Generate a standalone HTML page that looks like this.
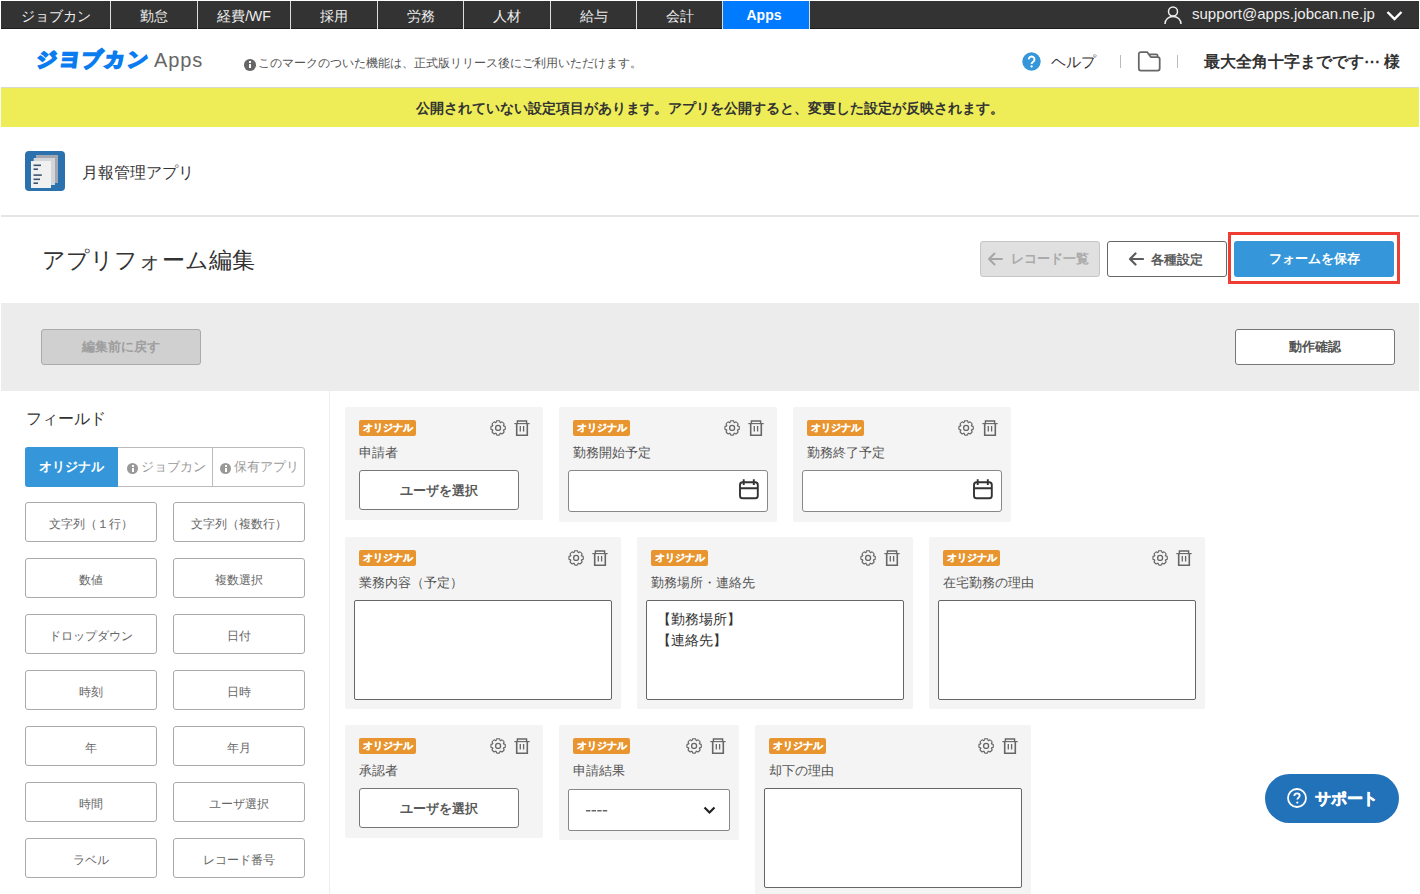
<!DOCTYPE html>
<html lang="ja">
<head>
<meta charset="utf-8">
<style>
*{box-sizing:border-box;margin:0;padding:0}
html,body{width:1420px;height:894px;overflow:hidden;background:#fff}
body{position:relative;font-family:"Liberation Sans",sans-serif;color:#333}
.a{position:absolute}
/* nav */
.nav{position:absolute;left:1px;top:1px;width:1418px;height:28px;background:#333;border-bottom:1px solid #1c1c1c}
.tab{position:absolute;top:1px;height:28px;background:#333;border-bottom:1px solid #1c1c1c;color:#eee;font-size:14px;line-height:30px;text-align:center;white-space:nowrap}
.tab.on{background:#007bff;border-bottom-color:#007bff;color:#fff;font-weight:bold}
.sep{position:absolute;top:1px;width:1px;height:28px;background:#ddd}
/* header */
.logo{position:absolute;left:37px;top:44px;font-size:20px;font-weight:bold;color:#0a7cf0;letter-spacing:2.6px;transform:skewX(-7deg);white-space:nowrap;line-height:30px;-webkit-text-stroke:2px #0a7cf0}
.apps{position:absolute;left:154px;top:47px;font-size:20px;color:#666;letter-spacing:0.9px;line-height:26px}
.info{position:absolute;left:244px;top:56px;font-size:12px;color:#555;white-space:nowrap;line-height:14px}
.ic-i{display:inline-block;width:11px;height:11px;border-radius:50%;background:#555;position:relative;vertical-align:-2.5px;margin-right:3px}
.ic-i:before{content:"";position:absolute;left:4.5px;top:2px;width:2px;height:2px;background:#fff}
.ic-i:after{content:"";position:absolute;left:4.5px;top:5px;width:2px;height:4px;background:#fff}
.yellow{position:absolute;left:1px;top:87px;width:1418px;height:40px;background:#eeed58;border-top:1px solid #d9d9cf;text-align:center;font-size:14px;font-weight:bold;line-height:40px;color:#333}
.apphead{position:absolute;left:1px;top:127px;width:1418px;height:90px;background:#fff;border-bottom:2px solid #e5e5e5}
.btn{position:absolute;border-radius:3px;text-align:center;font-weight:bold;font-size:13px;white-space:nowrap}
.gband{position:absolute;left:1px;top:303px;width:1418px;height:88px;background:#ececec}
.side-b{position:absolute;left:329px;top:391px;width:1px;height:503px;background:#eee}
.fb{position:absolute;width:132px;height:40px;border:1px solid #aaa;border-radius:3px;background:#fff;text-align:center;font-size:12px;line-height:42px;color:#666;white-space:nowrap}
.card{position:absolute;background:#f4f4f4;border-radius:2px}
.badge{position:absolute;left:13.7px;top:13px;width:57.5px;height:16px;background:#e8952f;border-radius:2px;color:#fff;font-size:10px;font-weight:bold;line-height:16px;-webkit-text-stroke:0.2px #fff;padding-left:1px;text-align:center;white-space:nowrap}
.lbl{position:absolute;left:14px;top:38px;font-size:13px;color:#555;line-height:16px;white-space:nowrap}
.gear{position:absolute;top:13px;width:16px;height:16px}
.trash{position:absolute;top:13px;width:16px;height:16px}
.ta{position:absolute;background:#fff;border:1px solid #666;border-radius:2px}
</style>
</head>
<body>
<!-- NAV -->
<div class="nav"></div>
<div class="tab" style="left:1px;width:109px">ジョブカン</div>
<div class="sep" style="left:110px"></div>
<div class="tab" style="left:111px;width:86px">勤怠</div>
<div class="sep" style="left:197px"></div>
<div class="tab" style="left:198px;width:92px">経費/WF</div>
<div class="sep" style="left:290px"></div>
<div class="tab" style="left:291px;width:86px">採用</div>
<div class="sep" style="left:377px"></div>
<div class="tab" style="left:378px;width:85px">労務</div>
<div class="sep" style="left:463px"></div>
<div class="tab" style="left:464px;width:86px">人材</div>
<div class="sep" style="left:550px"></div>
<div class="tab" style="left:551px;width:85px">給与</div>
<div class="sep" style="left:636px"></div>
<div class="tab" style="left:637px;width:85px">会計</div>
<div class="sep" style="left:722px"></div>
<div class="tab on" style="left:723px;width:86px;line-height:29px;padding-right:4px">Apps</div>
<div class="sep" style="left:809px"></div>

<!-- user -->
<svg class="a" style="left:1163px;top:5px" width="20" height="20" viewBox="0 0 20 20" fill="none" stroke="#eee" stroke-width="1.5"><circle cx="10" cy="6.5" r="4.5"/><path d="M2 19c0-4.5 3.6-7.5 8-7.5s8 3 8 7.5"/></svg>
<div class="a" style="left:1192px;top:5px;font-size:15px;color:#eee;line-height:18px;white-space:nowrap">support@apps.jobcan.ne.jp</div>
<svg class="a" style="left:1386px;top:10px" width="17" height="11" viewBox="0 0 17 11" fill="none" stroke="#fff" stroke-width="2.4"><path d="M1.5 2l7 7 7-7"/></svg>

<!-- HEADER -->
<div class="logo">ジヨブカン</div>
<div class="apps">Apps</div>
<div class="info"><span class="ic-i" style="width:11.5px;height:11.5px;vertical-align:-3.5px;background:#666;margin-right:2.5px"></span>このマークのついた機能は、正式版リリース後にご利用いただけます。</div>

<svg class="a" style="left:1022px;top:52px" width="19" height="19" viewBox="0 0 19 19"><circle cx="9.5" cy="9.5" r="9.2" fill="#3597da"/><path d="M6.8 7.4a2.85 2.85 0 1 1 4.4 2.3c-1 .7-1.6 1.2-1.6 2.2v.2" fill="none" stroke="#fff" stroke-width="1.9"/><circle cx="9.6" cy="14.4" r="1.15" fill="#fff"/></svg>
<div class="a" style="left:1051px;top:53px;font-size:15px;color:#333;line-height:18px">ヘルプ</div>
<div class="a" style="left:1120px;top:55px;width:1px;height:13px;background:#bbb"></div>
<svg class="a" style="left:1137px;top:51px" width="24" height="21" viewBox="0 0 24 21" fill="none" stroke="#666" stroke-width="1.75" stroke-linejoin="round"><path d="M1.8 3a2 2 0 0 1 2-2h6.3l3.7 5.1h6.9a2 2 0 0 1 2 2v9.5a2 2 0 0 1-2 2H3.8a2 2 0 0 1-2-2z"/><path d="M12.3 3.4h6.8a1.6 1.6 0 0 1 1.6 1.6v1.1"/></svg>
<div class="a" style="left:1177px;top:55px;width:1px;height:13px;background:#bbb"></div>
<div class="a" style="left:1204px;top:53px;font-size:16px;font-weight:bold;color:#333;line-height:18px;white-space:nowrap">最大全角十字までです⋯ 様</div>

<div class="yellow">公開されていない設定項目があります。アプリを公開すると、変更した設定が反映されます。</div>

<!-- APP HEADER -->
<div class="apphead"></div>
<svg class="a" style="left:25px;top:151px" width="40" height="40" viewBox="0 0 40 40">
<rect width="40" height="40" rx="4" fill="#2b71ad"/>
<rect x="11" y="4" width="22" height="28" fill="#a3a8b0"/>
<rect x="8.7" y="7" width="21.3" height="27" fill="#d2d6da"/>
<rect x="6" y="10" width="20" height="27" fill="#f0f0f0"/>
<g fill="#3d5470"><rect x="8.5" y="13.5" width="7.5" height="1.6"/><rect x="8.5" y="17.4" width="4.5" height="1.6"/><rect x="8.5" y="23.3" width="8.3" height="1.6"/><rect x="8.5" y="27.5" width="6.5" height="1.6"/><rect x="8.5" y="31.4" width="4.5" height="1.6"/></g>
</svg>
<div class="a" style="left:82px;top:163px;font-size:16px;color:#333;line-height:20px;white-space:nowrap">月報管理アプリ</div>

<!-- TITLE -->
<div class="a" style="left:42px;top:247px;font-size:23px;color:#333;line-height:26px;white-space:nowrap">アプリフォーム編集</div>

<div class="btn" style="left:980px;top:241px;width:120px;height:36px;background:#e0e0e0;border:1px solid #c6c6c6;color:#aaa;line-height:34px">
<svg style="position:absolute;left:6px;top:10px" width="16" height="14" viewBox="0 0 16 14" fill="none" stroke="#a6a6a6" stroke-width="2" stroke-linecap="round" stroke-linejoin="round"><path d="M15 7H2M7.5 1.5L2 7l5.5 5.5"/></svg>
<span style="position:absolute;left:30px;top:0">レコード一覧</span></div>
<div class="btn" style="left:1107px;top:241px;width:120px;height:36px;background:#fff;border:1px solid #666;color:#5c5c5c;line-height:35px">
<svg style="position:absolute;left:20px;top:10px" width="16" height="14" viewBox="0 0 16 14" fill="none" stroke="#5c5c5c" stroke-width="2.2" stroke-linecap="round" stroke-linejoin="round"><path d="M15 7H2M7.5 1.5L2 7l5.5 5.5"/></svg>
<span style="position:absolute;left:43px;top:0">各種設定</span></div>
<div class="a" style="left:1228px;top:232px;width:172px;height:52px;border:3px solid #ee3d32"></div>
<div class="btn" style="left:1234px;top:241px;width:160px;height:36px;background:#3597da;color:#fff;line-height:36px">フォームを保存</div>

<!-- GRAY BAND -->
<div class="gband"></div>
<div class="btn" style="left:41px;top:329px;width:160px;height:36px;background:#d0d0d0;border:1px solid #aaa;color:#9e9e9e;line-height:34px">編集前に戻す</div>
<div class="btn" style="left:1235px;top:329px;width:160px;height:36px;background:#fff;border:1px solid #777;color:#555;line-height:34px">動作確認</div>

<!-- SIDEBAR -->
<div class="side-b"></div>
<div class="a" style="left:26px;top:410px;font-size:16px;color:#333;line-height:18px">フィールド</div>
<div class="a" style="left:25px;top:447px;width:280px;height:40px;border:1px solid #bbb;border-radius:3px;background:#fff"></div>
<div class="a" style="left:25px;top:447px;width:93px;height:40px;background:#3597da;border-radius:3px 0 0 3px;color:#fff;font-size:13px;font-weight:bold;text-align:center;line-height:40px">オリジナル</div>
<div class="a" style="left:212px;top:447px;width:1px;height:40px;background:#bbb"></div>
<div class="a" style="left:127px;top:458px;font-size:13px;color:#999;line-height:18px;white-space:nowrap"><span class="ic-i" style="background:#999"></span>ジョブカン</div>
<div class="a" style="left:220px;top:458px;font-size:13px;color:#999;line-height:18px;white-space:nowrap"><span class="ic-i" style="background:#999"></span>保有アプリ</div>

<div class="fb" style="left:25px;top:502px">文字列（１行）</div>
<div class="fb" style="left:173px;top:502px">文字列（複数行）</div>
<div class="fb" style="left:25px;top:558px">数値</div>
<div class="fb" style="left:173px;top:558px">複数選択</div>
<div class="fb" style="left:25px;top:614px">ドロップダウン</div>
<div class="fb" style="left:173px;top:614px">日付</div>
<div class="fb" style="left:25px;top:670px">時刻</div>
<div class="fb" style="left:173px;top:670px">日時</div>
<div class="fb" style="left:25px;top:726px">年</div>
<div class="fb" style="left:173px;top:726px">年月</div>
<div class="fb" style="left:25px;top:782px">時間</div>
<div class="fb" style="left:173px;top:782px">ユーザ選択</div>
<div class="fb" style="left:25px;top:838px">ラベル</div>
<div class="fb" style="left:173px;top:838px">レコード番号</div>

<!-- CARDS -->
<svg width="0" height="0" style="position:absolute">
<symbol id="gear" viewBox="0 0 16 16"><path fill="none" stroke="#666" stroke-width="1.15" stroke-linejoin="round" d="M6.12 2.45L6.60 0.86A7.2 7.2 0 0 1 9.60 0.86L10.08 2.45A5.8 5.8 0 0 1 10.55 2.64L12.02 1.86A7.2 7.2 0 0 1 14.14 3.98L13.36 5.45A5.8 5.8 0 0 1 13.55 5.92L15.14 6.40A7.2 7.2 0 0 1 15.14 9.40L13.55 9.88A5.8 5.8 0 0 1 13.36 10.35L14.14 11.82A7.2 7.2 0 0 1 12.02 13.94L10.55 13.16A5.8 5.8 0 0 1 10.08 13.35L9.60 14.94A7.2 7.2 0 0 1 6.60 14.94L6.12 13.35A5.8 5.8 0 0 1 5.65 13.16L4.18 13.94A7.2 7.2 0 0 1 2.06 11.82L2.84 10.35A5.8 5.8 0 0 1 2.65 9.88L1.06 9.40A7.2 7.2 0 0 1 1.06 6.40L2.65 5.92A5.8 5.8 0 0 1 2.84 5.45L2.06 3.98A7.2 7.2 0 0 1 4.18 1.86L5.65 2.64A5.8 5.8 0 0 1 6.12 2.45Z"/><circle cx="8.1" cy="7.9" r="2.5" fill="none" stroke="#666" stroke-width="1.3"/></symbol>
<symbol id="trash" viewBox="0 0 16 16"><g fill="none" stroke="#666"><path stroke-width="1.1" d="M0.3 3.6h15.4"/><path stroke-width="1.4" d="M3.4 3.6V1h9.2v2.6"/><path stroke-width="1.6" d="M2.7 3.6v11.6h10.6V3.6"/><path stroke-width="1.3" d="M6.3 6v5.5M9.6 6v5.5"/></g></symbol>
</svg>
<div class="card" style="left:345px;top:407px;width:198px;height:113px"><div class="badge">オリジナル</div><svg class="gear" style="left:145px" viewBox="0 0 16 16"><use href="#gear"/></svg><svg class="trash" style="left:169px" viewBox="0 0 16 16"><use href="#trash"/></svg><div class="lbl">申請者</div><div class="ta" style="left:14px;top:63px;width:160px;height:40px;border-color:#777;border-radius:3px;text-align:center;font-size:13px;font-weight:bold;color:#5a5a5a;line-height:40px">ユーザを選択</div></div>
<div class="card" style="left:559px;top:407px;width:218px;height:115px"><div class="badge">オリジナル</div><svg class="gear" style="left:165px" viewBox="0 0 16 16"><use href="#gear"/></svg><svg class="trash" style="left:189px" viewBox="0 0 16 16"><use href="#trash"/></svg><div class="lbl">勤務開始予定</div><div class="ta" style="left:9px;top:63px;width:200px;height:42px;border-color:#888;border-radius:3px"><svg style="position:absolute;left:169px;top:8px" width="22" height="22" viewBox="0 0 22 22" fill="none" stroke="#333" stroke-width="1.9"><rect x="2" y="3.3" width="17.8" height="16" rx="2.6"/><path d="M2 9.2h17.8M5.7 0.3v5.6M15.8 0.3v5.6"/></svg></div></div>
<div class="card" style="left:793px;top:407px;width:218px;height:115px"><div class="badge">オリジナル</div><svg class="gear" style="left:165px" viewBox="0 0 16 16"><use href="#gear"/></svg><svg class="trash" style="left:189px" viewBox="0 0 16 16"><use href="#trash"/></svg><div class="lbl">勤務終了予定</div><div class="ta" style="left:9px;top:63px;width:200px;height:42px;border-color:#888;border-radius:3px"><svg style="position:absolute;left:169px;top:8px" width="22" height="22" viewBox="0 0 22 22" fill="none" stroke="#333" stroke-width="1.9"><rect x="2" y="3.3" width="17.8" height="16" rx="2.6"/><path d="M2 9.2h17.8M5.7 0.3v5.6M15.8 0.3v5.6"/></svg></div></div>
<div class="card" style="left:345px;top:537px;width:276px;height:172px"><div class="badge">オリジナル</div><svg class="gear" style="left:223px" viewBox="0 0 16 16"><use href="#gear"/></svg><svg class="trash" style="left:247px" viewBox="0 0 16 16"><use href="#trash"/></svg><div class="lbl">業務内容（予定）</div><div class="ta" style="left:9px;top:63px;width:258px;height:100px"></div></div>
<div class="card" style="left:637px;top:537px;width:276px;height:172px"><div class="badge">オリジナル</div><svg class="gear" style="left:223px" viewBox="0 0 16 16"><use href="#gear"/></svg><svg class="trash" style="left:247px" viewBox="0 0 16 16"><use href="#trash"/></svg><div class="lbl">勤務場所・連絡先</div><div class="ta" style="left:9px;top:63px;width:258px;height:100px;font-size:13.5px;color:#333;line-height:21px;padding:8px 0 0 10px;white-space:nowrap">【勤務場所】<br>【連絡先】</div></div>
<div class="card" style="left:929px;top:537px;width:276px;height:172px"><div class="badge">オリジナル</div><svg class="gear" style="left:223px" viewBox="0 0 16 16"><use href="#gear"/></svg><svg class="trash" style="left:247px" viewBox="0 0 16 16"><use href="#trash"/></svg><div class="lbl">在宅勤務の理由</div><div class="ta" style="left:9px;top:63px;width:258px;height:100px"></div></div>
<div class="card" style="left:345px;top:725px;width:198px;height:113px"><div class="badge">オリジナル</div><svg class="gear" style="left:145px" viewBox="0 0 16 16"><use href="#gear"/></svg><svg class="trash" style="left:169px" viewBox="0 0 16 16"><use href="#trash"/></svg><div class="lbl">承認者</div><div class="ta" style="left:14px;top:63px;width:160px;height:40px;border-color:#777;border-radius:3px;text-align:center;font-size:13px;font-weight:bold;color:#5a5a5a;line-height:40px">ユーザを選択</div></div>
<div class="card" style="left:559px;top:725px;width:180px;height:115px"><div class="badge">オリジナル</div><svg class="gear" style="left:127px" viewBox="0 0 16 16"><use href="#gear"/></svg><svg class="trash" style="left:151px" viewBox="0 0 16 16"><use href="#trash"/></svg><div class="lbl">申請結果</div><div class="ta" style="left:9px;top:64px;width:162px;height:42px;border-color:#888;border-radius:2px"><svg style="position:absolute;left:17px;top:19px" width="22" height="4" viewBox="0 0 22 4"><g fill="#666"><rect x="0" y="1" width="4.4" height="1.5"/><rect x="5.6" y="1" width="4.4" height="1.5"/><rect x="11.2" y="1" width="4.4" height="1.5"/><rect x="16.8" y="1" width="4.4" height="1.5"/></g></svg><svg style="position:absolute;left:134px;top:16px" width="13" height="9" viewBox="0 0 13 9" fill="none" stroke="#222" stroke-width="2.2"><path d="M1.5 1.5l5 5 5-5"/></svg></div></div>
<div class="card" style="left:755px;top:725px;width:276px;height:180px"><div class="badge">オリジナル</div><svg class="gear" style="left:223px" viewBox="0 0 16 16"><use href="#gear"/></svg><svg class="trash" style="left:247px" viewBox="0 0 16 16"><use href="#trash"/></svg><div class="lbl">却下の理由</div><div class="ta" style="left:9px;top:63px;width:258px;height:100px"></div></div>

<!-- SUPPORT -->
<div class="a" style="left:1265px;top:774px;width:134px;height:49px;border-radius:25px;background:#2272b9"></div>
<svg class="a" style="left:1287px;top:788px" width="20" height="20" viewBox="0 0 20 20"><circle cx="10" cy="10" r="9" fill="none" stroke="#fff" stroke-width="1.8"/><path d="M7.3 8c0-1.6 1.2-2.6 2.7-2.6s2.7 1 2.7 2.4c0 1.8-2.4 1.9-2.4 3.8" fill="none" stroke="#fff" stroke-width="1.8"/><circle cx="10.3" cy="14.6" r="1.1" fill="#fff"/></svg>
<div class="a" style="left:1315px;top:789px;font-size:16px;font-weight:bold;color:#fff;line-height:19px;-webkit-text-stroke:0.5px #fff;letter-spacing:-0.2px">サポート</div>
</body>
</html>
